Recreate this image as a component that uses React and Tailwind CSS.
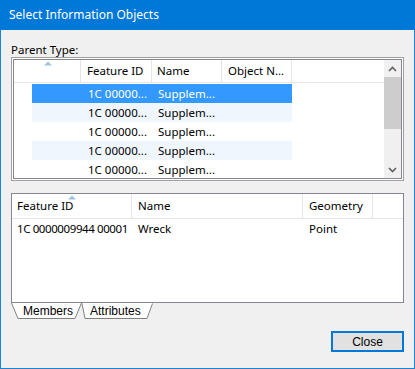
import React from "react";

const ui = { fontFamily: '"Segoe UI", "Noto Sans", sans-serif' };
const classic = { fontFamily: '"Liberation Sans", Arial, sans-serif' };

const parentRows = [0, 1, 2, 3, 4];

function SortArrow() {
  return (
    <svg width="8" height="5" viewBox="0 0 8 5" className="absolute">
      <path d="M0 4.5 L4 0.5 L8 4.5 Z" fill="#9cc3e2" />
    </svg>
  );
}

function Chevron({ up }) {
  return (
    <svg width="9" height="6" viewBox="0 0 9 6">
      <path
        d={up ? "M1 5 L4.5 1.5 L8 5" : "M1 1 L4.5 4.5 L8 1"}
        fill="none"
        stroke="#606060"
        strokeWidth="1.6"
      />
    </svg>
  );
}

function Tabs() {
  return (
    <div className="relative h-[17px] w-[146px]">
      <svg width="146" height="17" viewBox="0 0 146 17" className="absolute left-0 top-0">
        <path d="M71 0 L142 0 L136 15.5 L74 15.5 Z" fill="#ffffff" />
        <path d="M71 0.5 L74 15.5 L136 15.5 L141.5 0.5" fill="none" stroke="#808080" />
        <path d="M0.5 0 L70 0 L64 15.5 L7 15.5 Z" fill="#ffffff" />
        <path d="M0.5 0 L7 15.5 L64 15.5 L70.5 0" fill="none" stroke="#808080" />
      </svg>
      <div className="relative flex h-[16px] items-center whitespace-nowrap text-[12px] text-black" style={classic}>
        <span className="pl-[12px]">Members</span>
        <span className="pl-[17px]">Attributes</span>
      </div>
    </div>
  );
}

export default function App() {
  return (
    <div className="flex h-[369px] w-[415px] flex-col border-x border-b border-[#1883d7] bg-[#f0f0f0]" style={ui}>
      <div className="-mx-px flex h-[30px] shrink-0 items-center bg-[#0078d7] px-[9px] text-[12px] text-white">
        Select Information Objects
      </div>

      <div className="flex flex-1 flex-col px-[10px] pt-[12px]">
        <div className="h-[15px] text-[11.5px] leading-[15px] text-black">Parent Type:</div>

        <div className="h-[124px] border border-[#a0a0a0] bg-white p-[1px]">
          <div className="flex h-full overflow-hidden whitespace-nowrap border border-[#828790] text-[11.5px] text-black">
            <div className="flex-1 overflow-hidden">
              <div className="flex h-[23px] border-b border-[#e5e5e5]">
                <div className="relative w-[67px] border-r border-[#e5e5e5]">
                  <div className="absolute left-[30px] top-[1px]">
                    <SortArrow />
                  </div>
                </div>
                <div className="flex w-[71px] items-center border-r border-[#e5e5e5] pl-[6px]">Feature ID</div>
                <div className="flex w-[70px] items-center border-r border-[#e5e5e5] pl-[5px]">Name</div>
                <div className="flex w-[70px] items-center border-r border-[#e5e5e5] pl-[6px]">Object N...</div>
              </div>
              <div className="pt-[1px]">
                {parentRows.map((i) => (
                  <div key={i} className="flex h-[19px] pl-[18px]">
                    <div
                      className={
                        i === 0
                          ? "flex w-[260px] items-center bg-[#3399ff] text-white"
                          : i % 2 === 1
                          ? "flex w-[260px] items-center bg-[#f0f6fe]"
                          : "flex w-[260px] items-center bg-white"
                      }
                    >
                      <div className="w-[49px]" />
                      <div className="w-[71px] pl-[7px]">1C 00000...</div>
                      <div className="w-[70px] pl-[6px]">Supplem...</div>
                    </div>
                  </div>
                ))}
              </div>
            </div>

            <div className="flex w-[17px] flex-col bg-[#f0f0f0]">
              <div className="flex h-[17px] items-center justify-center">
                <Chevron up />
              </div>
              <div className="h-[52px] bg-[#cdcdcd]" />
              <div className="flex-1" />
              <div className="flex h-[17px] items-center justify-center">
                <Chevron />
              </div>
            </div>
          </div>
        </div>

        <div className="mt-[12px] h-[110px] whitespace-nowrap border border-[#828790] bg-white text-[11.5px] text-black">
          <div className="flex h-[25px] border-b border-[#e5e5e5]">
            <div className="relative flex w-[120px] items-center border-r border-[#e5e5e5] pl-[5px]">
              Feature ID
              <div className="absolute left-[56px] top-[1px]">
                <SortArrow />
              </div>
            </div>
            <div className="flex w-[171px] items-center border-r border-[#e5e5e5] pl-[6px]">Name</div>
            <div className="flex w-[70px] items-center border-r border-[#e5e5e5] pl-[6px]">Geometry</div>
          </div>
          <div className="flex h-[19px] items-center">
            <div className="w-[120px] pl-[5px] tracking-[-0.4px]">1C 0000009944 00001</div>
            <div className="w-[171px] pl-[6px]">Wreck</div>
            <div className="w-[70px] pl-[6px]">Point</div>
          </div>
        </div>

        <Tabs />

        <div className="mt-[11px] flex justify-end">
          <button
            className="flex h-[21px] w-[73px] items-center justify-center border-2 border-[#0078d7] bg-[#e1e1e1] text-[12px] text-black"
            style={classic}
          >
            Close
          </button>
        </div>
      </div>
    </div>
  );
}
